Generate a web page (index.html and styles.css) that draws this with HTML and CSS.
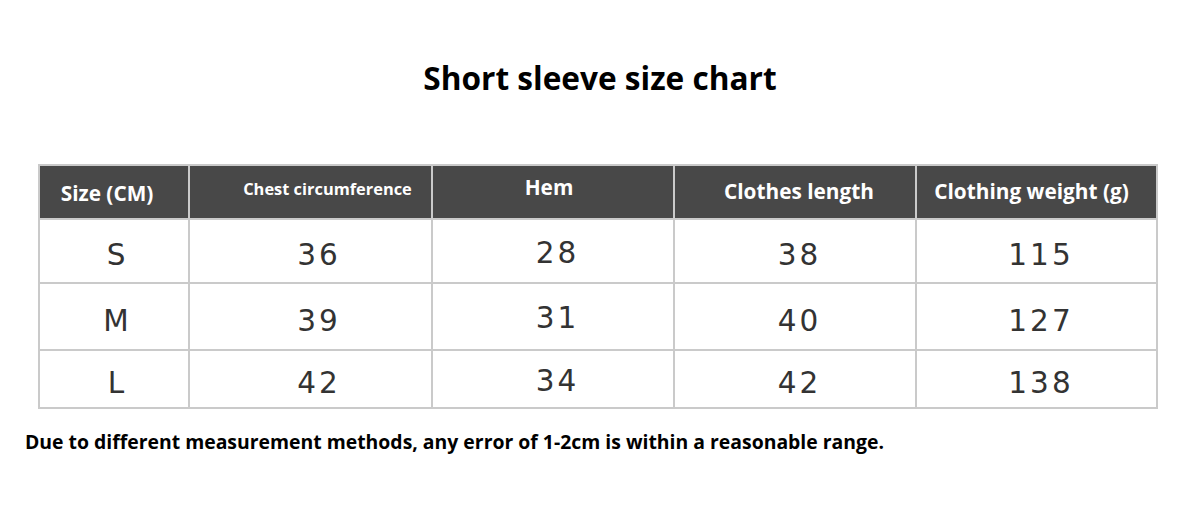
FILE: index.html
```html
<!DOCTYPE html>
<html>
<head>
<meta charset="utf-8">
<link rel="stylesheet" href="styles.css">
</head>
<body>
<div class="page">
  <h1 class="title">Short sleeve size chart</h1>
  <table class="chart">
    <colgroup>
      <col class="c1"><col class="c2"><col class="c3"><col class="c4"><col class="c5">
    </colgroup>
    <thead>
      <tr class="head">
        <th class="h-size">Size (CM)</th>
        <th class="h-chest">Chest circumference</th>
        <th class="h-hem">Hem</th>
        <th class="h-len">Clothes length</th>
        <th class="h-wt">Clothing weight (g)</th>
      </tr>
    </thead>
    <tbody>
      <tr class="r1">
        <td class="sz">S</td><td class="chest">36</td><td class="up">28</td><td>38</td><td>115</td>
      </tr>
      <tr class="r2">
        <td class="sz">M</td><td class="chest">39</td><td class="up">31</td><td>40</td><td>127</td>
      </tr>
      <tr class="r3">
        <td class="sz">L</td><td class="chest">42</td><td class="up">34</td><td>42</td><td>138</td>
      </tr>
    </tbody>
  </table>
  <p class="note">Due to different measurement methods, any error of 1-2cm is within a reasonable range.</p>
</div>
</body>
</html>
```
FILE: styles.css
```css
html, body {
  margin: 0;
  padding: 0;
  background: #ffffff;
}
.page {
  width: 1200px;
  height: 515px;
  padding-top: 56px;
  box-sizing: border-box;
}
.title {
  margin: 0;
  text-align: center;
  font-family: "Open Sans", sans-serif;
  font-weight: 700;
  font-size: 31.6px;
  line-height: 44px;
  letter-spacing: 0;
  color: #000;
}
.chart {
  margin: 64px 0 0 38px;
  border-collapse: collapse;
  table-layout: fixed;
  width: 1118px;
  border: 2px solid #cacaca;
}
.c1 { width: 150px; }
.c2 { width: 243px; }
.c3 { width: 242px; }
.c4 { width: 242px; }
.c5 { width: 241px; }
.chart th, .chart td {
  border: 2px solid #cacaca;
  padding: 0;
  text-align: center;
  vertical-align: middle;
}
.head th {
  background: #484848;
  color: #ffffff;
  font-family: "Open Sans", sans-serif;
  font-weight: 700;
  font-size: 20.8px;
  letter-spacing: 0;
  height: 42px;
  line-height: 24px;
}
.h-size { padding-right: 14px !important; padding-top: 2px !important; }
.h-chest { font-size: 16.4px !important; padding-left: 34px !important; padding-bottom: 6px !important; }
.h-hem { padding-bottom: 10px !important; padding-right: 8px !important; }
.h-len { padding-left: 8px !important; padding-bottom: 2px !important; }
.h-wt { padding-right: 10px !important; padding-bottom: 2px !important; }
.chart td {
  font-family: "DejaVu Sans", sans-serif;
  font-size: 29.5px;
  letter-spacing: 3px;
  color: #333333;
  padding-top: 8px;
  padding-left: 9px;
}
.chart td.chest { padding-left: 17px; }
.chart td.up { padding-top: 3px; padding-bottom: 0; }
.chart td.sz { padding-left: 4px; letter-spacing: 0; }
.r1 td { height: 54px; }
.r2 td { height: 57px; }
.r3 td { height: 48px; }
.note {
  margin: 20px 0 0 25px;
  font-family: "Open Sans", sans-serif;
  font-weight: 700;
  font-size: 19.4px;
  letter-spacing: 0;
  line-height: 26px;
  color: #000;
}
```
